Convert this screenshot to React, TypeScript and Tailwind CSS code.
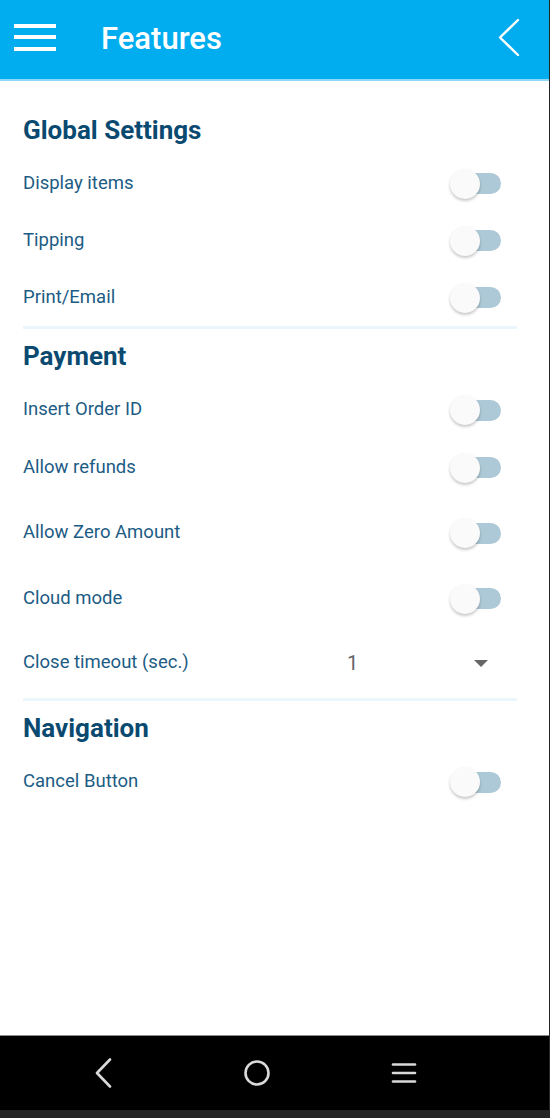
import React from "react";

function Toggle() {
  return (
    <div className="relative w-[51px] h-[32px] shrink-0">
      <div className="absolute right-0 top-[5.5px] w-[48px] h-[21px] rounded-full bg-[#adc8d6]" />
      <div className="absolute left-0 top-[1px] w-[30px] h-[30px] rounded-full bg-[#fafafa] shadow-[0_2px_3px_rgba(0,0,0,0.22)]" />
    </div>
  );
}

function Heading({ children, className = "" }: { children: React.ReactNode; className?: string }) {
  return (
    <div className={"h-[50px] flex items-center text-[26px] font-bold text-[#0b4a70] " + className}>
      {children}
    </div>
  );
}

function Row({ label, h }: { label: string; h: string }) {
  return (
    <div className={"flex items-center justify-between pr-[16px] " + h}>
      <span className="text-[18.5px] text-[#1c5c84]">{label}</span>
      <Toggle />
    </div>
  );
}

function Divider({ className = "" }: { className?: string }) {
  return <div className={"h-[3px] bg-[#e9f7fd] " + className} />;
}

export default function App() {
  return (
    <div className="w-[550px] h-[1118px] flex flex-col bg-white border-r border-[#262626] font-['Roboto','Noto_Sans',sans-serif] overflow-hidden">
      {/* Header */}
      <div className="h-[81px] shrink-0 bg-[#02adef] border-b-2 border-[#8fd7f6] flex items-center pb-[3px]">
        <div className="ml-[14px] w-[42px] flex flex-col gap-[7.5px] mb-[2px]">
          <div className="h-[4px] bg-white" />
          <div className="h-[4px] bg-white" />
          <div className="h-[4px] bg-white" />
        </div>
        <div className="ml-[45px] text-[31px] font-medium text-white leading-none">Features</div>
        <svg className="ml-auto mr-[29px]" width="22" height="40" viewBox="0 0 22 40">
          <polyline points="20,2 2,19.5 20,37" fill="none" stroke="white" strokeWidth="2.4" strokeLinecap="round" strokeLinejoin="round" />
        </svg>
      </div>

      {/* Content */}
      <div className="flex-1 flex flex-col pl-[23px] pr-[32px]">
        <Heading className="mt-[24px]">Global Settings</Heading>
        <Row label="Display items" h="h-[57px]" />
        <Row label="Tipping" h="h-[57px]" />
        <Row label="Print/Email" h="h-[57px]" />
        <Divider />

        <Heading className="mt-[2px]">Payment</Heading>
        <Row label="Insert Order ID" h="h-[58px]" />
        <Row label="Allow refunds" h="h-[57px]" />
        <Row label="Allow Zero Amount" h="h-[66px] mt-[4px]" />
        <Row label="Cloud mode" h="h-[65px]" />
        <div className="h-[64px] flex items-center">
          <span className="w-[324px] text-[18.5px] text-[#1c5c84]">Close timeout (sec.)</span>
          <span className="text-[20px] text-[#666666]">1</span>
          <svg className="ml-auto mr-[29px]" width="14" height="7" viewBox="0 0 14 7">
            <polygon points="0,0 14,0 7,7" fill="#666666" />
          </svg>
        </div>
        <Divider className="mt-[3px]" />

        <Heading className="mt-[2px]">Navigation</Heading>
        <Row label="Cancel Button" h="h-[58px]" />
      </div>

      {/* Android nav bar */}
      <div className="h-[75px] shrink-0 bg-black border-t border-[#8a8a8a] flex items-center">
        <svg className="ml-[95px]" width="18" height="30" viewBox="0 0 18 30">
          <polyline points="15,1.5 2,15 15,28.5" fill="none" stroke="#d9d9d9" strokeWidth="2.6" strokeLinecap="round" strokeLinejoin="round" />
        </svg>
        <svg className="ml-[130px]" width="28" height="28" viewBox="0 0 28 28">
          <circle cx="14" cy="14" r="11.5" fill="none" stroke="#d9d9d9" strokeWidth="2.6" />
        </svg>
        <svg className="ml-[120px]" width="26" height="22" viewBox="0 0 26 22">
          <line x1="2" y1="2.5" x2="24" y2="2.5" stroke="#d9d9d9" strokeWidth="2.6" strokeLinecap="round" />
          <line x1="2" y1="11" x2="24" y2="11" stroke="#d9d9d9" strokeWidth="2.6" strokeLinecap="round" />
          <line x1="2" y1="19.5" x2="24" y2="19.5" stroke="#d9d9d9" strokeWidth="2.6" strokeLinecap="round" />
        </svg>
      </div>
      <div className="h-[8px] shrink-0 bg-[#262626]" />
    </div>
  );
}
